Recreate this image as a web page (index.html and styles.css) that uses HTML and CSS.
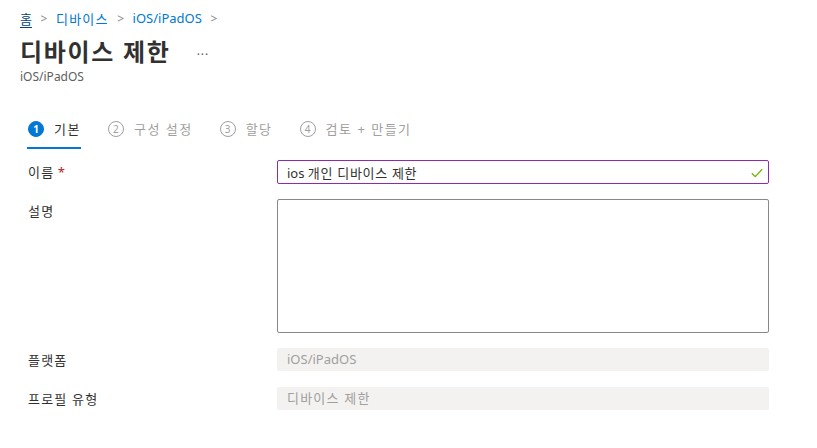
FILE: index.html
```html
<!DOCTYPE html>
<html lang="ko">
<head>
<meta charset="utf-8">
<link rel="stylesheet" href="styles.css">
</head>
<body>
<div class="page">
  <nav class="crumbs">
    <a class="crumb home ko">홈</a>
    <span class="sep">&gt;</span>
    <a class="crumb ko">디바이스</a>
    <span class="sep">&gt;</span>
    <a class="crumb">iOS/iPadOS</a>
    <span class="sep">&gt;</span>
  </nav>
  <div class="title-row">
    <h1 class="title">디바이스 제한</h1>
    <span class="more">···</span>
  </div>
  <div class="subtitle">iOS/iPadOS</div>

  <div class="tabs">
    <div class="tab active"><span class="num">1</span><span class="tab-label ko">기본</span></div>
    <div class="tab"><span class="num">2</span><span class="tab-label ko">구성 설정</span></div>
    <div class="tab"><span class="num">3</span><span class="tab-label ko">할당</span></div>
    <div class="tab"><span class="num">4</span><span class="tab-label ko">검토 + 만들기</span></div>
  </div>

  <div class="form">
    <div class="row">
      <label class="label"><span class="ko">이름</span> <span class="req">*</span></label>
      <div class="field input valid">
        <span class="value">ios <span class="ko-input">개인 디바이스 제한</span></span>
        <svg class="check" width="12" height="10" viewBox="0 0 12 10"><path d="M0.8 5.2 L4.2 8.6 L11.2 1.2" fill="none" stroke="#6bb700" stroke-width="1.3"/></svg>
      </div>
    </div>
    <div class="row">
      <label class="label ko">설명</label>
      <div class="field textarea"></div>
    </div>
    <div class="row">
      <label class="label ko">플랫폼</label>
      <div class="field readonly">iOS/iPadOS</div>
    </div>
    <div class="row">
      <label class="label ko">프로필 유형</label>
      <div class="field readonly ko">디바이스 제한</div>
    </div>
  </div>
</div>
</body>
</html>
```

FILE: styles.css
```css
* { box-sizing: border-box; }
body {
  margin: 0;
  background: #fff;
  font-family: "Noto Sans", "Noto Sans CJK KR", sans-serif;
  color: #323130;
}
.page { padding: 8px 0 0 20px; }
.ko { letter-spacing: 1.2px; }
.ko-input { letter-spacing: 0.7px; }

.crumbs {
  display: flex;
  align-items: center;
  height: 20px;
  font-size: 13px;
}
.crumb { color: #0078d4; }
.crumb.home { color: #004578; text-decoration: underline; text-underline-offset: 3px; letter-spacing: 0; }
.sep { color: #8a8886; width: 24px; text-align: center; font-size: 12px; }

.title-row {
  display: flex;
  align-items: center;
  margin-top: 9px;
  height: 30px;
}
.title {
  margin: 0;
  font-size: 24px;
  font-weight: 700;
  line-height: 30px;
  letter-spacing: 1.7px;
  color: #323130;
}
.more {
  margin-left: 26px;
  font-size: 12px;
  color: #605e5c;
  letter-spacing: 1px;
  margin-top: 4px;
}
.subtitle {
  font-size: 12px;
  color: #605e5c;
  line-height: 16px;
  margin-top: 2px;
}

.tabs {
  display: flex;
  gap: 26px;
  margin-top: 30px;
  padding-left: 7px;
}
.tab {
  display: flex;
  align-items: center;
  gap: 10px;
  height: 34px;
  padding: 0 1px 5px;
  color: #a19f9d;
  font-size: 13px;
  border-bottom: 2px solid transparent;
}
.tab.active { border-bottom-color: #0078d4; color: #323130; }
.tab-label { letter-spacing: 1.5px; margin-right: -1px; }
.num {
  width: 16px;
  height: 16px;
  border-radius: 50%;
  border: 1px solid #a19f9d;
  display: flex;
  align-items: center;
  justify-content: center;
  font-size: 10px;
  line-height: 1;
  letter-spacing: 0;
}
.tab.active .num {
  background: #0078d4;
  border-color: #0078d4;
  color: #fff;
  font-weight: 700;
}

.form {
  margin-top: 11px;
  padding-left: 8px;
  display: flex;
  flex-direction: column;
  gap: 15px;
}
.row { display: flex; align-items: flex-start; }
.label {
  width: 249px;
  font-size: 13px;
  line-height: 24px;
  color: #323130;
}
.req { color: #a4262c; }
.field {
  width: 492px;
  font-size: 13px;
}
.input {
  height: 24px;
  border: 1px solid #8a2bb0;
  border-radius: 2px;
  display: flex;
  align-items: center;
  justify-content: space-between;
  padding: 0 5px 0 9px;
  color: #323130;
}
.check { margin-top: 1px; }
.textarea {
  height: 134px;
  border: 1px solid #8a8886;
  border-radius: 2px;
}
.readonly {
  height: 23px;
  background: #f3f2f1;
  border-radius: 2px;
  color: #a19f9d;
  line-height: 23px;
  padding-left: 10px;
}
```
